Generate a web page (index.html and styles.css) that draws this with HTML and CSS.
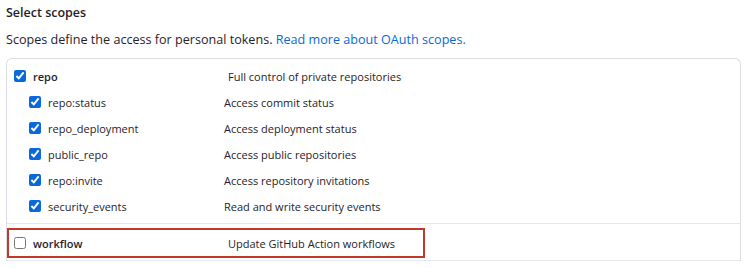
FILE: index.html
```html
<!DOCTYPE html>
<html lang="en">
<head>
  <meta charset="UTF-8" />
  <title>Select scopes</title>
  <link rel="stylesheet" href="styles.css">
</head>
<body>
  <!-- Scopes -->
  <div class="scopes-section">
    <h3 class="scopes-title">Select scopes</h3>
    <p class="scopes-note">Scopes define the access for personal tokens. <a href="#">Read more about OAuth scopes.</a></p>

    <div class="scopes-box">
      <div class="scope-group">
        <label class="scope-row">
          <span class="scope-name top"><input type="checkbox" checked> repo</span>
          <span class="scope-desc">Full control of private repositories</span>
        </label>
        <label class="scope-row sub">
          <span class="scope-name"><input type="checkbox" checked> repo:status</span>
          <span class="scope-desc">Access commit status</span>
        </label>
        <label class="scope-row sub">
          <span class="scope-name"><input type="checkbox" checked> repo_deployment</span>
          <span class="scope-desc">Access deployment status</span>
        </label>
        <label class="scope-row sub">
          <span class="scope-name"><input type="checkbox" checked> public_repo</span>
          <span class="scope-desc">Access public repositories</span>
        </label>
        <label class="scope-row sub">
          <span class="scope-name"><input type="checkbox" checked> repo:invite</span>
          <span class="scope-desc">Access repository invitations</span>
        </label>
        <label class="scope-row sub">
          <span class="scope-name"><input type="checkbox" checked> security_events</span>
          <span class="scope-desc">Read and write security events</span>
        </label>
      </div>

      <div class="scope-group">
        <label class="scope-row highlight">
          <span class="scope-name top"><input type="checkbox"> workflow</span>
          <span class="scope-desc">Update GitHub Action workflows</span>
        </label>
      </div>
    </div>
  </div>
</body>
</html>
```

FILE: styles.css
```css
body {
  font-family: 'Open Sans', 'Noto Sans', sans-serif;
  background-color: #fff;
  color: #1f2328;
  margin: 0;
  padding: 0;
}

.scopes-section {
  padding: 4px 9px 0 6px;
}

.scopes-title {
  font-size: 12.5px;
  font-weight: 600;
  margin: 0;
  line-height: 18px;
}

.scopes-note {
  font-size: 12.6px;
  margin: 9px 0 0 0;
  line-height: 18px;
}

.scopes-note a {
  color: #0969da;
  text-decoration: none;
}

.scopes-box {
  margin-top: 9px;
  border: 1px solid #d8dee4;
  border-bottom: none;
  border-radius: 6px 6px 0 0;
}

.scope-group {
  padding: 4px 0;
  border-bottom: 1px solid #e4e8ec;
}

.scope-group:last-child {
  padding: 4px 0 2px 0;
  height: 30px;
}

.scope-row {
  display: flex;
  align-items: center;
  height: 26px;
  font-size: 11px;
}

.scope-name {
  display: flex;
  align-items: center;
  gap: 7px;
  width: 195px;
  margin-left: 22px;
}

.scope-name.top {
  width: 214px;
  margin-left: 7px;
  font-weight: 600;
}

.scope-name input {
  width: 12px;
  height: 12px;
  margin: 0;
  accent-color: #0969da;
}

.scope-row.highlight {
  width: 414px;
  height: 26px;
  border: 2px solid #c0392b;
  box-sizing: content-box;
}

.scope-row.highlight .scope-name {
  margin-left: 5px;
}
```
